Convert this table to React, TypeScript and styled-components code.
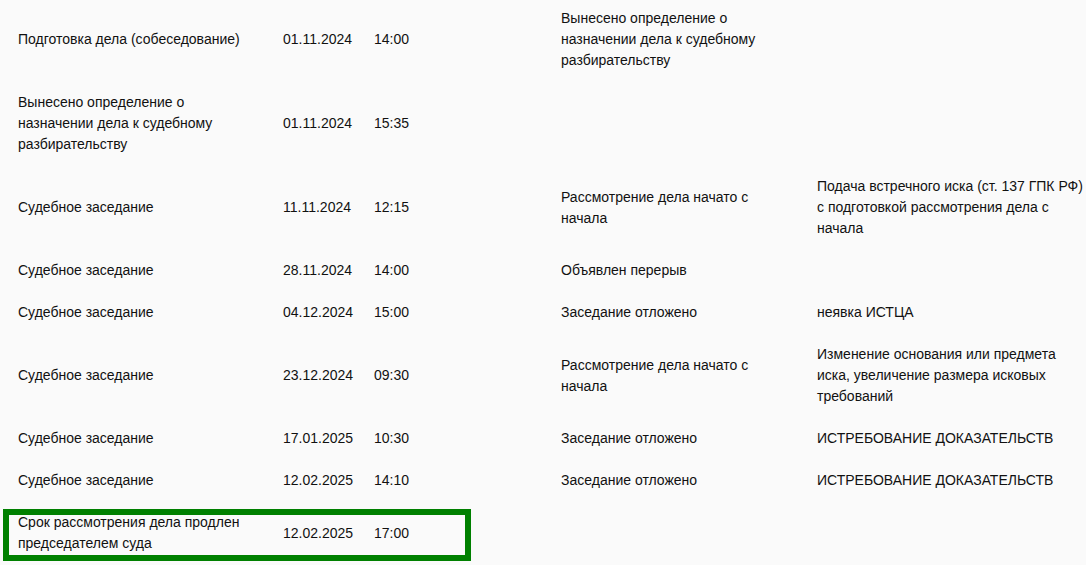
import { ReactElement } from 'react';
import styled, { createGlobalStyle } from 'styled-components';

interface CourtEvent {
  name: string;
  date: string;
  time: string;
  place: string;
  result: string;
  basis: string;
  highlighted?: boolean;
}

const events: CourtEvent[] = [
  {
    name: 'Подготовка дела (собеседование)',
    date: '01.11.2024',
    time: '14:00',
    place: '',
    result: 'Вынесено определение о назначении дела к судебному разбирательству',
    basis: '',
  },
  {
    name: 'Вынесено определение о назначении дела к судебному разбирательству',
    date: '01.11.2024',
    time: '15:35',
    place: '',
    result: '',
    basis: '',
  },
  {
    name: 'Судебное заседание',
    date: '11.11.2024',
    time: '12:15',
    place: '',
    result: 'Рассмотрение дела начато с начала',
    basis: 'Подача встречного иска (ст. 137 ГПК РФ) с подготовкой рассмотрения дела с начала',
  },
  {
    name: 'Судебное заседание',
    date: '28.11.2024',
    time: '14:00',
    place: '',
    result: 'Объявлен перерыв',
    basis: '',
  },
  {
    name: 'Судебное заседание',
    date: '04.12.2024',
    time: '15:00',
    place: '',
    result: 'Заседание отложено',
    basis: 'неявка ИСТЦА',
  },
  {
    name: 'Судебное заседание',
    date: '23.12.2024',
    time: '09:30',
    place: '',
    result: 'Рассмотрение дела начато с начала',
    basis: 'Изменение основания или предмета иска, увеличение размера исковых требований',
  },
  {
    name: 'Судебное заседание',
    date: '17.01.2025',
    time: '10:30',
    place: '',
    result: 'Заседание отложено',
    basis: 'ИСТРЕБОВАНИЕ ДОКАЗАТЕЛЬСТВ',
  },
  {
    name: 'Судебное заседание',
    date: '12.02.2025',
    time: '14:10',
    place: '',
    result: 'Заседание отложено',
    basis: 'ИСТРЕБОВАНИЕ ДОКАЗАТЕЛЬСТВ',
  },
  {
    name: 'Срок рассмотрения дела продлен председателем суда',
    date: '12.02.2025',
    time: '17:00',
    place: '',
    result: '',
    basis: '',
    highlighted: true,
  },
];

const GlobalStyle = createGlobalStyle`
  html, body {
    margin: 0;
    padding: 0;
    background: #fafafa;
    overflow: hidden;
  }
`;

const EventsTable = styled.div`
  margin-top: -2px;
  width: 1090px;
  font-family: 'Liberation Sans', Arial, sans-serif;
  font-size: 14px;
  line-height: 21px;
  color: #111;
`;

const Row = styled.div`
  position: relative;
  display: grid;
  grid-template-columns: 265px 91px 91px 96px 256px 270px;
  align-items: center;
  padding-left: 18px;

  & > div:nth-child(1) {
    padding-right: 40px;
  }
  & > div:nth-child(5) {
    padding-right: 50px;
  }
`;

const Cell = styled.div`
  padding: 10px 0 11px;
`;

const Highlight = styled.span`
  position: absolute;
  top: 7px;
  left: 3px;
  width: 468px;
  height: 52px;
  box-sizing: border-box;
  border: 6px solid #008000;
  pointer-events: none;
`;

export default function App(): ReactElement {
  return (
    <>
      <GlobalStyle />
      <EventsTable>
        {events.map((ev, idx: number) => (
          <Row key={idx}>
            <Cell>{ev.name}</Cell>
            <Cell>{ev.date}</Cell>
            <Cell>{ev.time}</Cell>
            <Cell>{ev.place}</Cell>
            <Cell>{ev.result}</Cell>
            <Cell>{ev.basis}</Cell>
            {ev.highlighted && <Highlight />}
          </Row>
        ))}
      </EventsTable>
    </>
  );
}
